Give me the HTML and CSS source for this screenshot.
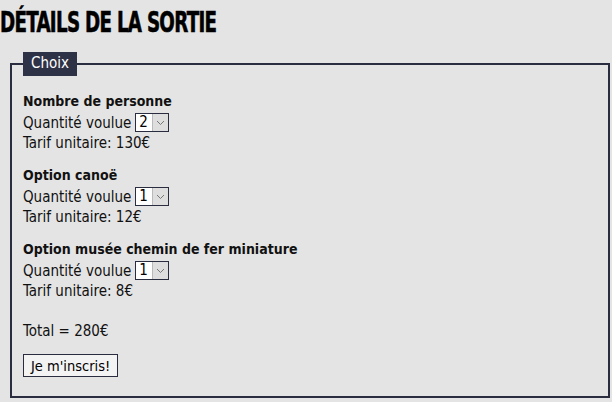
FILE: index.html
```html
<!DOCTYPE html>
<html>

<head>
    <title>Détails de la sortie</title>
    <link rel="stylesheet" href="styles.css">
</head>

<body>

    <h1 class="page-title">Détails de la sortie</h1>

    <form class="booking">
        <fieldset class="choices">
            <legend>Choix</legend>

            <div class="option">
                <h3>Nombre de personne</h3>
                <div class="qty-row">
                    <label for="qty1">Quantité voulue</label>
                    <span class="picker">
                        <select id="qty1">
                            <option>1</option>
                            <option selected>2</option>
                            <option>3</option>
                        </select>
                        <span class="arrow"><svg width="9" height="6" viewBox="0 0 9 6"><path d="M1 1 L4.5 4.5 L8 1" fill="none" stroke="#777" stroke-width="1"/></svg></span>
                    </span>
                </div>
                <p class="price">Tarif unitaire: 130€</p>
            </div>

            <div class="option">
                <h3>Option canoë</h3>
                <div class="qty-row">
                    <label for="qty2">Quantité voulue</label>
                    <span class="picker">
                        <select id="qty2">
                            <option selected>1</option>
                            <option>2</option>
                        </select>
                        <span class="arrow"><svg width="9" height="6" viewBox="0 0 9 6"><path d="M1 1 L4.5 4.5 L8 1" fill="none" stroke="#777" stroke-width="1"/></svg></span>
                    </span>
                </div>
                <p class="price">Tarif unitaire: 12€</p>
            </div>

            <div class="option">
                <h3>Option musée chemin de fer miniature</h3>
                <div class="qty-row">
                    <label for="qty3">Quantité voulue</label>
                    <span class="picker">
                        <select id="qty3">
                            <option selected>1</option>
                            <option>2</option>
                        </select>
                        <span class="arrow"><svg width="9" height="6" viewBox="0 0 9 6"><path d="M1 1 L4.5 4.5 L8 1" fill="none" stroke="#777" stroke-width="1"/></svg></span>
                    </span>
                </div>
                <p class="price">Tarif unitaire: 8€</p>
            </div>

            <p class="total">Total = 280€</p>

            <button type="button">Je m'inscris!</button>
        </fieldset>
    </form>

</body>

</html>
```

FILE: styles.css
```css
body {
    margin: 0;
    background-color: #e4e4e4;
    font-family: "DejaVu Sans Condensed", "DejaVu Sans", sans-serif;
    font-size: 15px;
    color: #111;
}

.page-title {
    margin: 0;
    padding-top: 7px;
    height: 41px;
    font-family: "DejaVu Sans Condensed", sans-serif;
    font-weight: 900;
    font-size: 29px;
    line-height: 30px;
    text-transform: uppercase;
    letter-spacing: -1px;
    color: #000;
    -webkit-text-stroke: 0.6px #000;
    transform: scaleX(0.7);
    transform-origin: left top;
    white-space: nowrap;
}

.choices {
    margin: 4px 2px 0 10px;
    padding: 15px 11px 19px 11px;
    border: 2px solid #2a2d3f;
}

.choices legend {
    padding: 3px 8px 4px 8px;
    background-color: #2e3246;
    color: #fff;
    font-size: 15px;
    line-height: 17px;
}

.option {
    margin-bottom: 11px;
}

.option h3 {
    margin: 0;
    font-size: 14px;
    line-height: 21px;
}

.qty-row {
    display: flex;
    align-items: center;
    gap: 4px;
    height: 21px;
}

.picker {
    display: inline-flex;
    height: 19px;
    border: 1px solid #2a2d3f;
    box-sizing: border-box;
    background-color: #fff;
}

.picker select {
    appearance: none;
    -webkit-appearance: none;
    border: none;
    outline: none;
    margin: 0;
    padding: 0 0 0 3px;
    width: 16px;
    background: #fff;
    font-family: "DejaVu Sans Condensed", sans-serif;
    font-size: 15px;
    line-height: 17px;
    color: #000;
}

.picker .arrow {
    display: flex;
    align-items: center;
    justify-content: center;
    width: 15px;
    background-color: #dedede;
    border-left: 1px solid #b9b9b9;
}

.price {
    margin: 0;
    line-height: 21px;
}

.total {
    margin: 19px 0 13px 0;
    line-height: 20px;
}

button {
    height: 23px;
    padding: 0 7px;
    background-color: #f3f3f3;
    border: 1px solid #2a2d3f;
    font-family: "DejaVu Sans Condensed", sans-serif;
    font-size: 14.5px;
    color: #000;
    cursor: pointer;
}
```
